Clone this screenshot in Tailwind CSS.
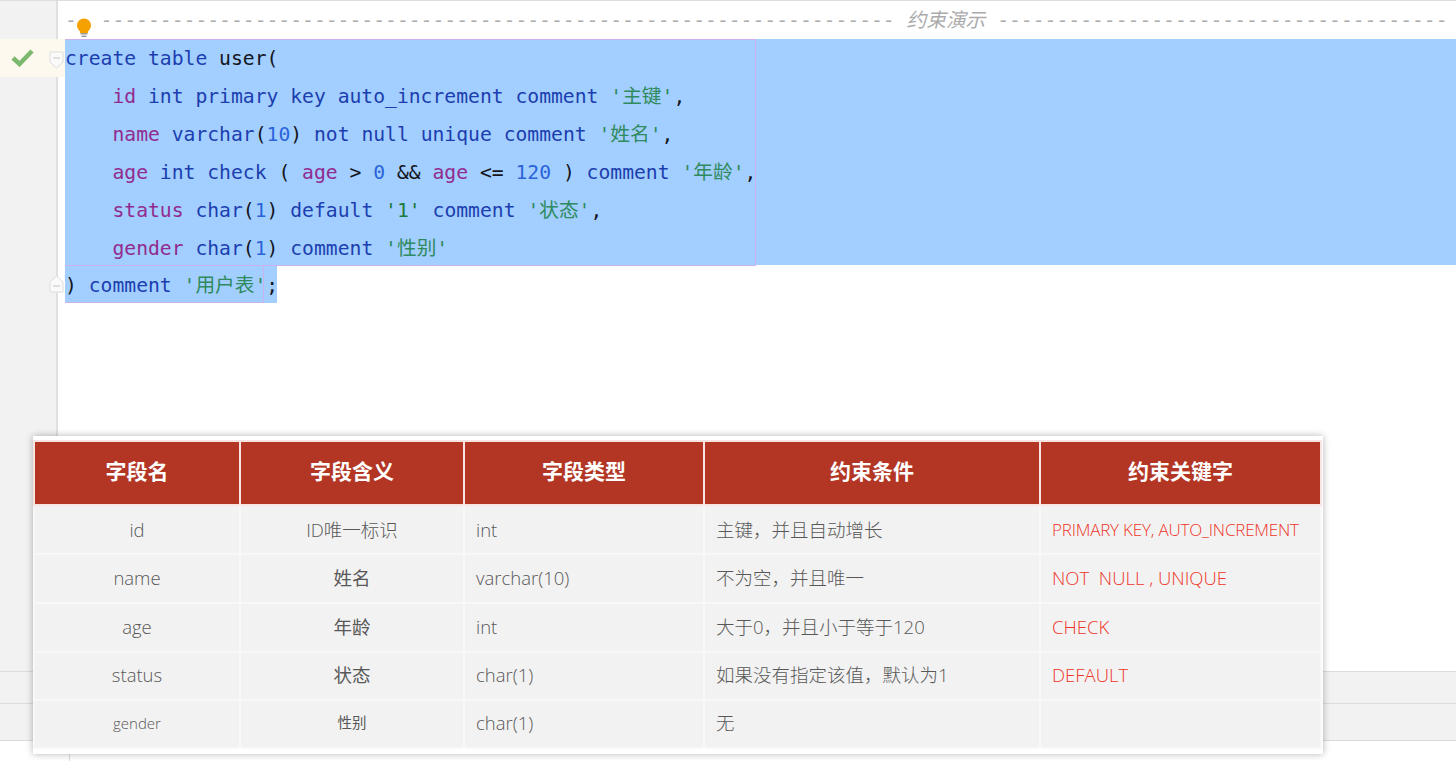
<!DOCTYPE html>
<html lang="zh">
<head>
<meta charset="utf-8">
<title>约束演示</title>
<script src="https://cdn.jsdelivr.net/npm/@tailwindcss/browser@4"></script>
</head>
<body class="relative w-[1456px] h-[761px] overflow-hidden bg-white">
<div class="flex flex-col h-full border-t border-[#dedede] font-['DejaVu_Sans_Mono','Noto_Sans_CJK_SC',monospace] text-[19.7px] text-[#14141c]">
  <!-- comment line -->
  <div class="flex h-[38px] shrink-0">
    <div class="w-[58px] bg-[#f2f2f2] border-r-2 border-[#e0e0e0]"></div>
    <div class="pl-[7px] leading-[40px] whitespace-pre text-[#ababab] overflow-hidden flex-1">-- ------------------------------------------------------------------- <span class="italic">约束演示</span> --------------------------------------</div>
  </div>
  <!-- selected lines -->
  <div class="flex h-[38px] shrink-0 leading-[40px]">
    <div class="relative w-[65px] bg-[#fdf9ee] shrink-0">
      <svg class="absolute left-[11px] top-[10px]" width="23" height="18" viewBox="0 0 23 18"><path d="M2 9 L8.5 15 L21 2" fill="none" stroke="#7db86f" stroke-width="4.5"/></svg>
      <svg class="absolute left-[49px] top-[12px]" width="15" height="18" viewBox="0 0 15 18"><path d="M1 1 H14 V11 L7.5 17 L1 11 Z" fill="#fafafa" stroke="#dddddd"/><path d="M4 7 H11" stroke="#c4c4c4"/></svg>
    </div>
    <div class="flex-1 bg-[#a2cfff] whitespace-pre"><span class="text-[#1c3eaf]">create table</span> user(</div>
  </div>
  <div class="flex h-[38px] shrink-0 leading-[40px]">
    <div class="w-[58px] bg-[#f2f2f2] border-r-2 border-[#e0e0e0]"></div><div class="w-[7px]"></div>
    <div class="flex-1 bg-[#a2cfff] whitespace-pre">    <span class="text-[#922b8f]">id</span> <span class="text-[#1c3eaf]">int primary key auto_increment comment</span> <span class="text-[#2f8a5e]">'主键'</span>,</div>
  </div>
  <div class="flex h-[38px] shrink-0 leading-[40px]">
    <div class="w-[58px] bg-[#f2f2f2] border-r-2 border-[#e0e0e0]"></div><div class="w-[7px]"></div>
    <div class="flex-1 bg-[#a2cfff] whitespace-pre">    <span class="text-[#922b8f]">name</span> <span class="text-[#1c3eaf]">varchar</span>(<span class="text-[#2b63d9]">10</span>) <span class="text-[#1c3eaf]">not null unique comment</span> <span class="text-[#2f8a5e]">'姓名'</span>,</div>
  </div>
  <div class="flex h-[38px] shrink-0 leading-[40px]">
    <div class="w-[58px] bg-[#f2f2f2] border-r-2 border-[#e0e0e0]"></div><div class="w-[7px]"></div>
    <div class="flex-1 bg-[#a2cfff] whitespace-pre">    <span class="text-[#922b8f]">age</span> <span class="text-[#1c3eaf]">int check</span> ( <span class="text-[#922b8f]">age</span> &gt; <span class="text-[#2b63d9]">0</span> &amp;&amp; <span class="text-[#922b8f]">age</span> &lt;= <span class="text-[#2b63d9]">120</span> ) <span class="text-[#1c3eaf]">comment</span> <span class="text-[#2f8a5e]">'年龄'</span>,</div>
  </div>
  <div class="flex h-[38px] shrink-0 leading-[40px]">
    <div class="w-[58px] bg-[#f2f2f2] border-r-2 border-[#e0e0e0]"></div><div class="w-[7px]"></div>
    <div class="flex-1 bg-[#a2cfff] whitespace-pre">    <span class="text-[#922b8f]">status</span> <span class="text-[#1c3eaf]">char</span>(<span class="text-[#2b63d9]">1</span>) <span class="text-[#1c3eaf]">default</span> <span class="text-[#1d7a3a]">'1'</span> <span class="text-[#1c3eaf]">comment</span> <span class="text-[#2f8a5e]">'状态'</span>,</div>
  </div>
  <div class="flex h-[36px] shrink-0 leading-[40px]">
    <div class="w-[58px] bg-[#f2f2f2] border-r-2 border-[#e0e0e0]"></div><div class="w-[7px]"></div>
    <div class="flex-1 bg-[#a2cfff] whitespace-pre">    <span class="text-[#922b8f]">gender</span> <span class="text-[#1c3eaf]">char</span>(<span class="text-[#2b63d9]">1</span>) <span class="text-[#1c3eaf]">comment</span> <span class="text-[#2f8a5e]">'性别'</span></div>
  </div>
  <div class="flex h-[38px] shrink-0 leading-[42px]">
    <div class="relative w-[58px] bg-[#f2f2f2] border-r-2 border-[#e0e0e0]">
      <svg class="absolute left-[49px] top-[10px] z-10" width="15" height="18" viewBox="0 0 15 18"><path d="M1 17 H14 V7 L7.5 1 L1 7 Z" fill="#fafafa" stroke="#dddddd"/><path d="M4 11 H11" stroke="#c4c4c4"/></svg>
    </div><div class="w-[7px]"></div>
    <div class="w-[212px] h-[38px] bg-[#a2cfff] whitespace-pre">) <span class="text-[#1c3eaf]">comment</span> <span class="text-[#2f8a5e]">'用户表'</span>;</div>
  </div>
  <div class="flex flex-1">
    <div class="w-[58px] bg-[#f2f2f2] border-r-2 border-[#e0e0e0]"></div>
  </div>
  <!-- lower tool bars -->
  <div class="h-[32px] shrink-0 bg-[#f2f2f2] border-t border-[#dcdcdc]"></div>
  <div class="h-[38px] shrink-0 bg-[#f2f2f2] border-y border-[#dcdcdc]"></div>
  <div class="h-[20px] shrink-0 flex"><div class="w-[70px] border-r border-[#dcdcdc]"></div></div>
</div>

<!-- selection outline -->
<div class="absolute left-[65px] top-[39px] w-[691px] h-[227px] border border-[#c9b2ee] border-l-0 pointer-events-none"></div>
<div class="absolute left-[65px] top-[265px] w-[199px] h-[38px] border-r border-b border-[#c9b2ee] pointer-events-none"></div>

<!-- hint bulb -->
<svg class="absolute left-[76px] top-[18px]" width="16" height="20" viewBox="0 0 16 20"><circle cx="8" cy="7.5" r="7" fill="#f5a100"/><rect x="4" y="12" width="8" height="3" fill="#f5a100"/><rect x="4.5" y="15" width="7" height="1.5" fill="#9a9a9a"/><rect x="5.5" y="17.5" width="5" height="1.5" fill="#9a9a9a"/></svg>

<!-- constraint table -->
<div class="absolute left-[33px] top-[436px] w-[1290px] h-[318px] bg-white shadow-[0_0_7px_rgba(0,0,0,0.3)] pt-[4px] font-['Open_Sans','Noto_Sans_CJK_SC',sans-serif]">
  <table class="table-fixed border-collapse w-[1287px] text-[18.5px] text-[#585858]">
    <colgroup><col class="w-[206px]"><col class="w-[224px]"><col class="w-[240px]"><col class="w-[336px]"><col class="w-[281px]"></colgroup>
    <thead>
      <tr class="h-[64px] bg-[#b33625] text-white text-[21px] font-bold">
        <th class="border-2 border-[#f6e5e2] pb-[2px]">字段名</th>
        <th class="border-2 border-[#f6e5e2] pb-[2px]">字段含义</th>
        <th class="border-2 border-[#f6e5e2] pb-[2px]">字段类型</th>
        <th class="border-2 border-[#f6e5e2] pb-[2px]">约束条件</th>
        <th class="border-2 border-[#f6e5e2] pb-[2px]">约束关键字</th>
      </tr>
    </thead>
    <tbody class="bg-[#f2f2f2] font-light">
      <tr class="h-[49px]">
        <td class="border-2 border-[#f8f8f8] text-center">id</td>
        <td class="border-2 border-[#f8f8f8] text-center">ID唯一标识</td>
        <td class="border-2 border-[#f8f8f8] pl-[11px]">int</td>
        <td class="border-2 border-[#f8f8f8] pl-[11px]">主键，并且自动增长</td>
        <td class="border-2 border-[#f8f8f8] pl-[11px] text-[#ee3528] text-[17px] tracking-[-0.2px]">PRIMARY KEY, AUTO_INCREMENT</td>
      </tr>
      <tr class="h-[49px]">
        <td class="border-2 border-[#f8f8f8] text-center pb-[2px]">name</td>
        <td class="border-2 border-[#f8f8f8] text-center font-normal pb-[2px]">姓名</td>
        <td class="border-2 border-[#f8f8f8] pl-[11px] pb-[2px]">varchar(10)</td>
        <td class="border-2 border-[#f8f8f8] pl-[11px] pb-[2px]">不为空，并且唯一</td>
        <td class="border-2 border-[#f8f8f8] pl-[11px] pb-[2px] text-[#ee3528] whitespace-pre">NOT  NULL , UNIQUE</td>
      </tr>
      <tr class="h-[49px]">
        <td class="border-2 border-[#f8f8f8] text-center pb-[2px]">age</td>
        <td class="border-2 border-[#f8f8f8] text-center font-normal pb-[2px]">年龄</td>
        <td class="border-2 border-[#f8f8f8] pl-[11px] pb-[2px]">int</td>
        <td class="border-2 border-[#f8f8f8] pl-[11px] pb-[2px]">大于0，并且小于等于120</td>
        <td class="border-2 border-[#f8f8f8] pl-[11px] pb-[2px] text-[#ee3528]">CHECK</td>
      </tr>
      <tr class="h-[48px]">
        <td class="border-2 border-[#f8f8f8] text-center pb-[2px]">status</td>
        <td class="border-2 border-[#f8f8f8] text-center font-normal pb-[2px]">状态</td>
        <td class="border-2 border-[#f8f8f8] pl-[11px] pb-[2px]">char(1)</td>
        <td class="border-2 border-[#f8f8f8] pl-[11px] pb-[2px]">如果没有指定该值，默认为1</td>
        <td class="border-2 border-[#f8f8f8] pl-[11px] pb-[2px] text-[#ee3528]">DEFAULT</td>
      </tr>
      <tr class="h-[48px]">
        <td class="border-2 border-[#f8f8f8] text-center text-[15px] pb-[2px]">gender</td>
        <td class="border-2 border-[#f8f8f8] text-center text-[14.5px] font-normal pb-[2px]">性别</td>
        <td class="border-2 border-[#f8f8f8] pl-[11px] pb-[2px]">char(1)</td>
        <td class="border-2 border-[#f8f8f8] pl-[11px] pb-[2px]">无</td>
        <td class="border-2 border-[#f8f8f8] pl-[11px]"></td>
      </tr>
    </tbody>
  </table>
</div>
</body>
</html>
